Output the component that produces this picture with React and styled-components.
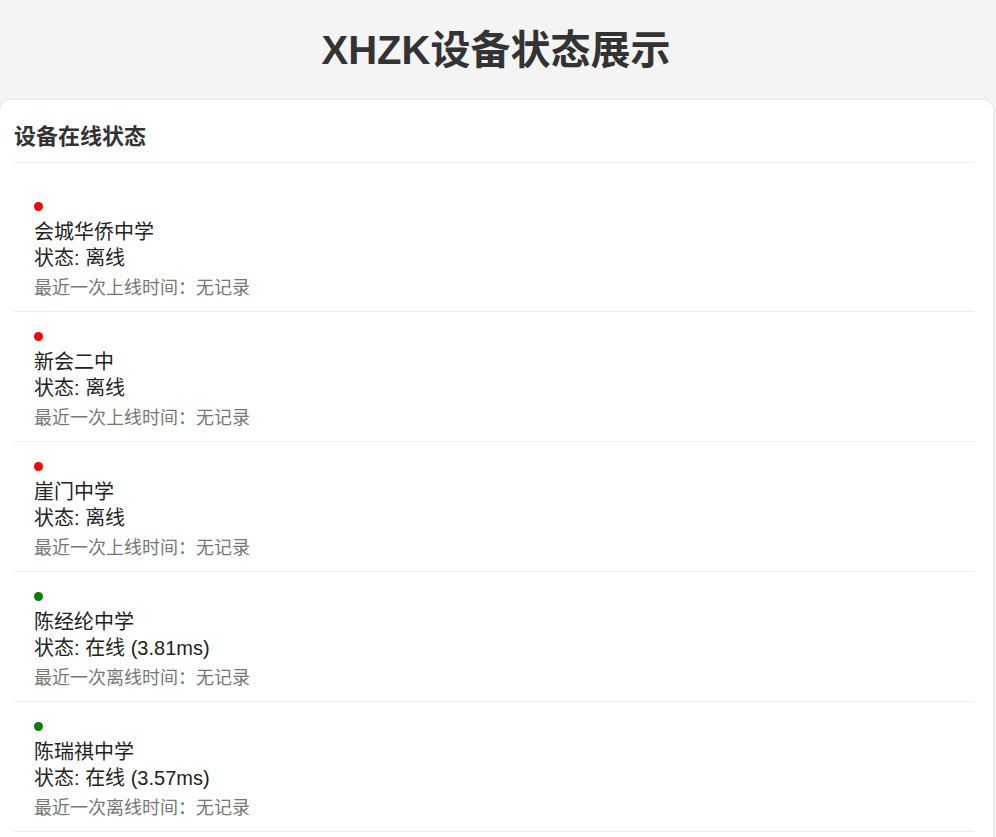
import React from "react";
import styled, { createGlobalStyle } from "styled-components";

const devices = [
  { name: "会城华侨中学", online: false, note: "最近一次上线时间：无记录" },
  { name: "新会二中", online: false, note: "最近一次上线时间：无记录" },
  { name: "崖门中学", online: false, note: "最近一次上线时间：无记录" },
  { name: "陈经纶中学", online: true, ping: "3.81ms", note: "最近一次离线时间：无记录" },
  { name: "陈瑞祺中学", online: true, ping: "3.57ms", note: "最近一次离线时间：无记录" },
];

const GlobalStyle = createGlobalStyle`
  html, body {
    margin: 0;
    padding: 0;
    background: #f4f4f4;
    font-family: "Liberation Sans", Arial, "Noto Sans CJK SC", sans-serif;
    color: #222;
  }
`;

const Page = styled.div`
  min-height: 837px;
  overflow: hidden;
`;

const Title = styled.h1`
  margin: 0;
  height: 100px;
  line-height: 100px;
  text-align: center;
  font-size: 40px;
  font-weight: 700;
  color: #333;
  padding-right: 4px;
`;

const Card = styled.div`
  width: 993px;
  box-sizing: border-box;
  background: #fff;
  border-radius: 10px;
  box-shadow: 0 1px 4px rgba(0, 0, 0, 0.12);
  padding: 22px 19px 0 14px;
  min-height: 760px;
`;

const CardHeader = styled.h2`
  margin: 0;
  font-size: 22px;
  font-weight: 700;
  line-height: 30px;
  padding-bottom: 10px;
  border-bottom: 1px solid #eee;
  color: #333;
`;

const List = styled.div`
  padding-top: 20px;
`;

const Item = styled.div`
  padding: 20px 20px 10px;
  border-bottom: 1px solid #eee;

  &:first-child {
    padding-top: 19px;
  }
`;

const Dot = styled.span`
  display: block;
  width: 9px;
  height: 9px;
  border-radius: 50%;
  background: ${(p) => (p.$online ? "#008000" : "#ff0000")};
  margin-bottom: 8px;
`;

const Name = styled.div`
  font-size: 20px;
  line-height: 26px;
  color: #222;
`;

const Status = styled(Name)``;

const Note = styled.div`
  font-size: 18px;
  line-height: 26px;
  margin-top: 4px;
  color: #777;
`;

export default function App() {
  return (
    <Page>
      <GlobalStyle />
      <Title>XHZK设备状态展示</Title>
      <Card>
        <CardHeader>设备在线状态</CardHeader>
        <List>
          {devices.map((d) => (
            <Item key={d.name}>
              <Dot $online={d.online} />
              <Name>{d.name}</Name>
              <Status>
                状态: {d.online ? `在线 (${d.ping})` : "离线"}
              </Status>
              <Note>{d.note}</Note>
            </Item>
          ))}
        </List>
      </Card>
    </Page>
  );
}
